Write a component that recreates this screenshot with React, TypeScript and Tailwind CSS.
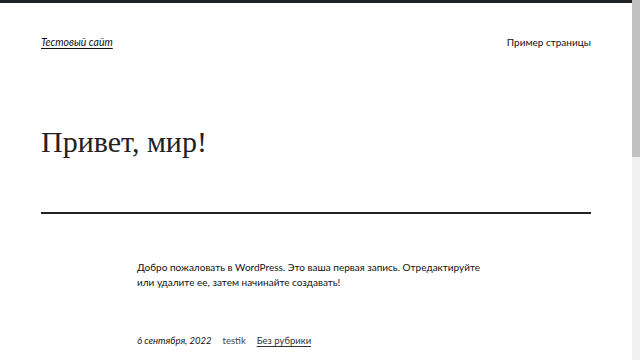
import React from 'react';

const sans = { fontFamily: 'Lato, "Liberation Sans", Arial, sans-serif' };

export default function App() {
  return (
    <div className="flex w-[640px] h-[360px] overflow-hidden bg-white">
      <div className="flex flex-col w-[632px] h-full">
        {/* Top admin edge */}
        <div className="h-[3px] w-full bg-[#1d2327]" />

        {/* Header */}
        <header className="flex items-center justify-between px-[41px] mt-[32px] text-[10px] text-[#111]" style={sans}>
          <a className="italic text-[10.5px] underline underline-offset-2">Тестовый сайт</a>
          <a>Пример страницы</a>
        </header>

        {/* Title */}
        <h1
          className="px-[41px] mt-[76px] text-[30px] font-light leading-none text-[#222]"
          style={{ fontFamily: '"Liberation Serif", "DejaVu Serif", serif' }}
        >
          Привет, мир!
        </h1>

        <div className="mx-[41px] mt-[55px] h-[2px] bg-[#222]" />

        {/* Content */}
        <div className="ml-[137px] w-[360px] mt-[46px] text-[10px] leading-[15px] text-[#111]" style={sans}>
          <p>
            Добро пожаловать в WordPress. Это ваша первая запись. Отредактируйте или удалите ее, затем начинайте создавать!
          </p>
          <div className="flex items-center gap-[11px] mt-[43px] text-[9.5px]">
            <span className="italic">6 сентября, 2022</span>
            <span className="text-[#444]">testik</span>
            <a className="underline underline-offset-2 text-[#333]">Без рубрики</a>
          </div>
        </div>
      </div>

      {/* Scrollbar */}
      <div className="flex flex-col w-[8px] h-full bg-[#f0f0f0]">
        <div className="h-[157px] w-full bg-[#c1c1c1]" />
      </div>
    </div>
  );
}
